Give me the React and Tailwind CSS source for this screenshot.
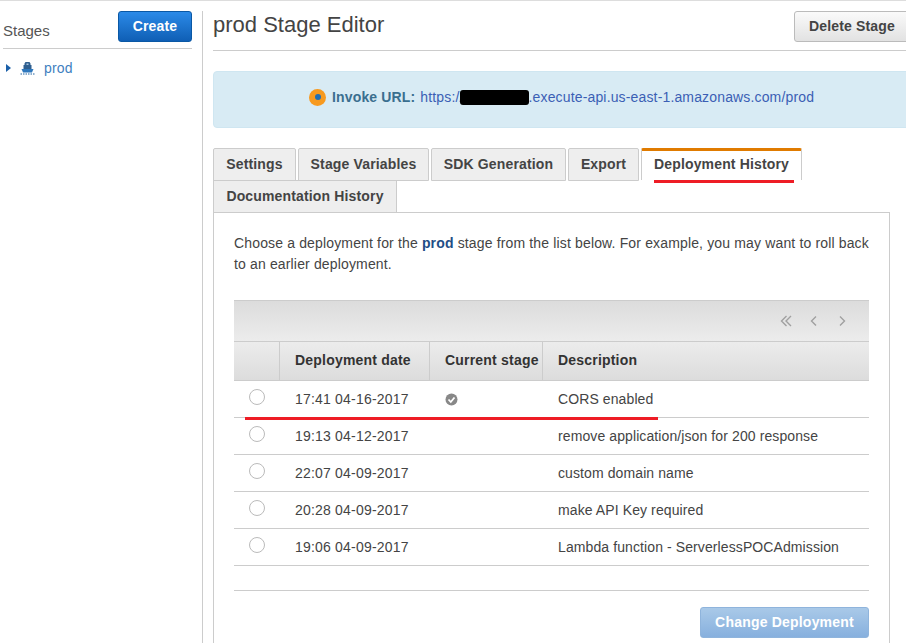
import React from 'react';

const TAB = "h-[33px] pt-[5px] border border-[#ccc] rounded-t-[2px] bg-[#eee] font-bold text-[#444] text-center whitespace-nowrap";

const ROWS = [
    { date: '17:41 04-16-2017', current: true, desc: 'CORS enabled' },
    { date: '19:13 04-12-2017', desc: 'remove application/json for 200 response' },
    { date: '22:07 04-09-2017', desc: 'custom domain name' },
    { date: '20:28 04-09-2017', desc: 'make API Key required' },
    { date: '19:06 04-09-2017', desc: 'Lambda function - ServerlessPOCAdmission' },
];

const StageIcon = () => (
    <svg width="15" height="15" viewBox="0 0 15 15" className="shrink-0">
        <path d="M5.500 1h4l1 1.500V4h1v4h-8V4h1V2.500z" fill="#2f5f8f" />
        <path d="M6.500 2.500h2V4h-2z" fill="#a9c4dc" />
        <path d="M1.500 8h12l-1.500 3.500H3z" fill="#2f78bd" />
        <path d="M0.500 13h14" stroke="#8fb0d0" strokeWidth="2" strokeDasharray="1.500 1" />
    </svg>
);

const Chevron = ({ d }) => (
    <svg width="14" height="14" viewBox="0 0 14 14" fill="none" stroke="#a0a0a0" strokeWidth="1.400">
        <path d={d} />
    </svg>
);

const App = () => {
    return (
        <div className="relative w-[906px] h-[643px] overflow-hidden bg-white border-t border-[#ddd] font-['Liberation_Sans',Arial,sans-serif] text-sm text-[#444] tracking-[0.15px]">
            <div className="flex items-start pt-[10px]">
                {/* left column */}
                <div className="w-[189px] ml-[3px] shrink-0">
                    <div className="flex items-end justify-between h-[34px] pb-[3px] border-b border-[#ccc] box-content">
                        <span className="mb-[4px] text-[15px] leading-5 tracking-normal text-[#555]">Stages</span>
                        <button className="w-[74px] h-[31px] mb-[3px] pb-[2px] rounded-[3px] border border-[#0a58a5] bg-gradient-to-b from-[#2b8ae8] to-[#0f5fb5] text-white font-bold">Create</button>
                    </div>
                    <div className="flex items-center h-5 mt-[9px] pl-[3px]">
                        <span className="w-0 h-0 border-y-[4px] border-y-transparent border-l-[5px] border-l-[#1a5fa8]"></span>
                        <span className="ml-[9px]"><StageIcon /></span>
                        <a className="ml-[9px] text-[#3f7fbf]">prod</a>
                    </div>
                </div>

                <div className="w-px h-[640px] ml-[10px] bg-[#ccc] shrink-0"></div>

                {/* main column */}
                <div className="w-[700px] ml-[10px] shrink-0">
                    <div className="flex justify-between h-[40px] border-b border-[#ccc]">
                        <h1 className="text-[22px] leading-7 tracking-normal text-[#444]">prod Stage Editor</h1>
                        <button className="w-[119px] h-[31px] pl-[14px] pb-[2px] text-left rounded-[3px] border border-[#bbb] bg-gradient-to-b from-[#fafafa] to-[#e2e2e2] font-bold text-[#444]">Delete Stage</button>
                    </div>

                    <div className="flex items-center h-[57px] mt-[20px] pl-[95px] pb-[5px] rounded-l-[4px] border border-[#cfe6f1] bg-[#d8ebf4]">
                        <span className="flex items-center justify-center w-[17px] h-[17px] rounded-full bg-[#f79a1f]">
                            <span className="w-[6px] h-[6px] rounded-full bg-[#1f6fb5]"></span>
                        </span>
                        <b className="ml-[6px] text-[#3a6f8f]">Invoke URL:</b>
                        <a className="ml-[5px] text-[#3b5fb5]">
                            https://<span className="inline-block w-[69px] h-[15px] -ml-[4px] align-[-3px] rounded-[3px] bg-black"></span>.execute-api.us-east-1.amazonaws.com/prod
                        </a>
                    </div>

                    {/* tabs */}
                    <div className="w-[677px] mt-[20px]">
                        <div className="flex gap-[2px] h-[32px]">
                            <div className={`${TAB} w-[83px]`}>Settings</div>
                            <div className={`${TAB} w-[131px]`}>Stage Variables</div>
                            <div className={`${TAB} w-[135px]`}>SDK Generation</div>
                            <div className={`${TAB} w-[71px]`}>Export</div>
                            <div className="w-[161px] h-[32px] pt-[3px] border-x border-[#ccc] border-t-[3px] border-t-[#e07b00] rounded-t-[2px] bg-white font-bold text-[#444] text-center whitespace-nowrap">Deployment History</div>
                        </div>
                        <div className="relative flex h-[32px]">
                            <div className="w-[184px] pt-[5px] border border-[#ccc] border-b-0 bg-[#eee] font-bold text-[#444] text-center whitespace-nowrap">Documentation History</div>
                        </div>
                    </div>

                    {/* panel */}
                    <div className="w-[677px] h-[440px] px-[20px] pt-[20px] border border-[#ccc]">
                        <p className="leading-[21px] text-[#444]">
                            Choose a deployment for the <b className="text-[#1f4e86]">prod</b> stage from the list below. For example, you may want to roll back to an earlier deployment.
                        </p>

                        <div className="mt-[25px] h-[41px] flex items-center justify-end gap-[14px] pr-[20px] border-t border-[#ccc] bg-gradient-to-b from-[#dcdcdc] to-[#ececec]">
                            <Chevron d="M7.500 2 2.500 7l5 5M12 2 7 7l5 5" />
                            <Chevron d="M9 2.500 4.500 7 9 11.500" />
                            <Chevron d="M5 2.500 9.500 7 5 11.500" />
                        </div>

                        <div className="flex h-[40px] border-y border-[#ccc] bg-gradient-to-b from-[#ececec] to-[#dcdcdc] font-bold text-[#333] tracking-[0.2px] leading-[37px]">
                            <div className="w-[46px] border-r border-[#ccc]"></div>
                            <div className="w-[150px] pl-[15px] border-r border-[#ccc]">Deployment date</div>
                            <div className="w-[113px] pl-[15px] border-r border-[#ccc] whitespace-nowrap">Current stage</div>
                            <div className="pl-[15px]">Description</div>
                        </div>

                        {ROWS.map((row) => (
                            <div key={row.date} className="flex items-center h-[37px] border-b border-[#ccc]">
                                <div className="w-[46px] pl-[15px] pb-[5px]">
                                    <div className="w-4 h-4 rounded-full border border-[#bbb] bg-white"></div>
                                </div>
                                <div className="w-[150px] pl-[15px] tracking-[0.2px]">{row.date}</div>
                                <div className="w-[113px] pl-[15px]">
                                    {row.current && (
                                        <svg width="13" height="13" viewBox="0 0 13 13">
                                            <circle cx="6.500" cy="6.500" r="6" fill="#888" />
                                            <path d="M3.500 6.500 5.800 9 9.500 4.500" fill="none" stroke="#fff" strokeWidth="1.800" />
                                        </svg>
                                    )}
                                </div>
                                <div className="pl-[15px] whitespace-nowrap tracking-[0.1px]">{row.desc}</div>
                            </div>
                        ))}

                        <div className="h-[24px] border-b border-[#ccc] box-content"></div>

                        <div className="flex justify-end mt-[16px]">
                            <button className="w-[169px] h-[31px] pb-[2px] rounded-[3px] border border-[#8fb4dc] bg-gradient-to-b from-[#a9c9e8] to-[#87b0de] text-white font-bold tracking-[0.2px]">Change Deployment</button>
                        </div>
                    </div>
                </div>
            </div>

            {/* red annotations drawn over the screenshot */}
            <div className="absolute left-[654px] top-[179px] w-[140px] h-[3px] bg-[#ee1c25]"></div>
            <div className="absolute left-[245px] top-[416px] w-[413px] h-[3px] bg-[#ee1c25]"></div>
        </div>
    );
};

export default App;
